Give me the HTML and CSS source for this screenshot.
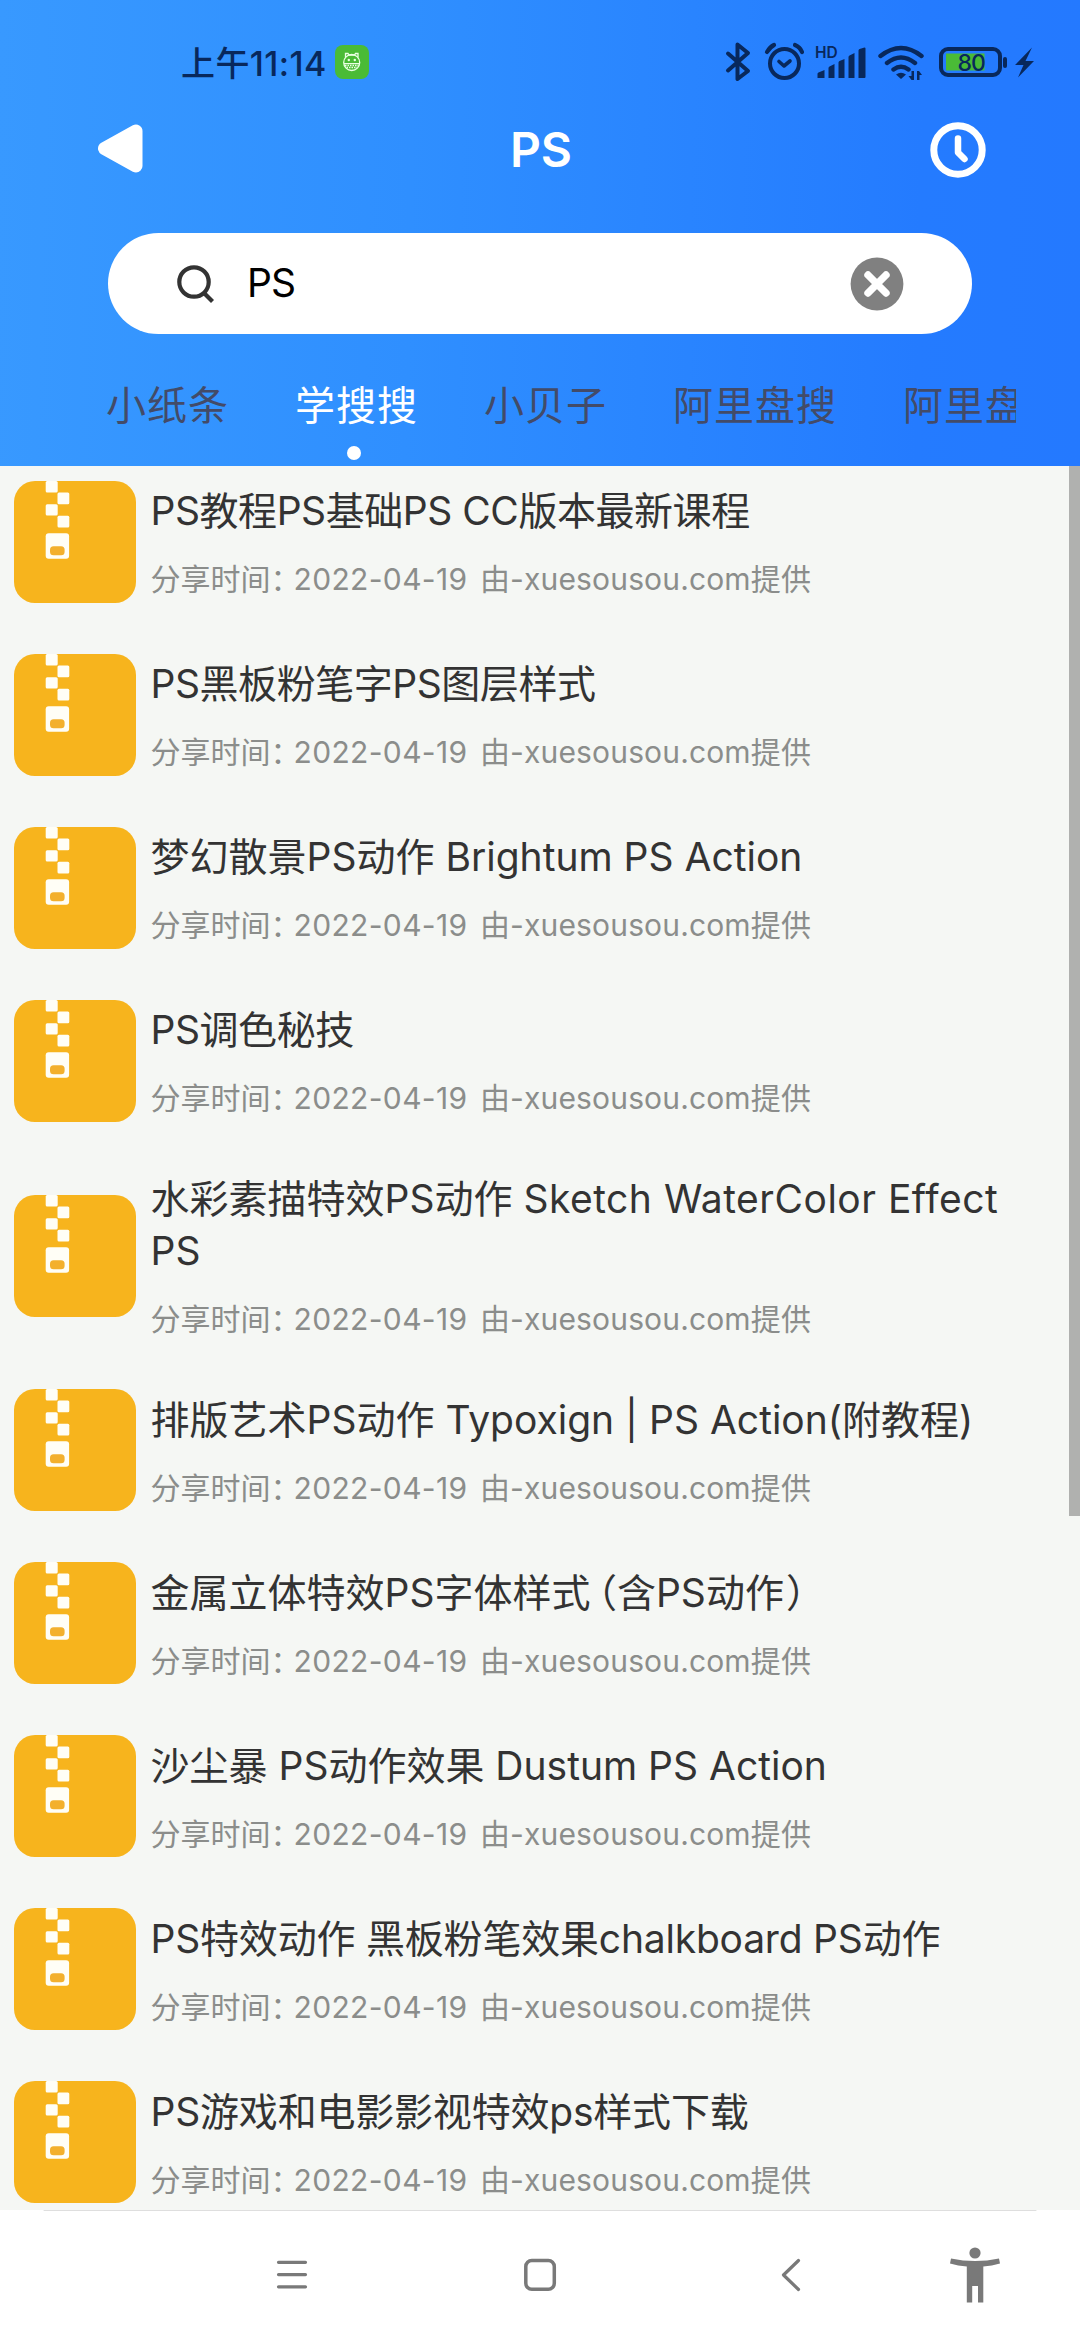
FILE: index.html
```html
<!DOCTYPE html>
<html lang="zh-CN">
<head>
<meta charset="utf-8">
<title>PS</title>
<link rel="stylesheet" href="styles.css">
</head>
<body>
<svg class="defs" width="0" height="0">
  <symbol id="zip" viewBox="0 0 122 122">
    <rect width="122" height="122" rx="21" fill="#f7b41d"/>
    <g fill="#fffef6">
      <rect x="31.7" y="0" width="12" height="11.4" rx="1.5"/>
      <rect x="43.5" y="11.6" width="11.8" height="11.6" rx="1.5"/>
      <rect x="31.7" y="23.2" width="12" height="11.4" rx="1.5"/>
      <rect x="43.5" y="34.8" width="11.8" height="11.6" rx="1.5"/>
      <rect x="31.7" y="52.2" width="23.4" height="25.6" rx="3"/>
    </g>
    <rect x="36" y="65.3" width="14.6" height="9" rx="3.5" fill="#f3b02d"/>
  </symbol>
</svg>
<header class="header">
  <div class="status">
    <span class="clock">上午11:14</span>
    <svg class="app" width="34" height="34" viewBox="0 0 34 34">
      <rect width="34" height="34" rx="8" fill="#4abb36"/>
      <g fill="none" stroke="#e9ffe2" stroke-width="1.3">
        <circle cx="16.7" cy="17.5" r="8"/>
        <path d="M10.5 12.5V8.5h2.5l1 1.5h5.500l1-1.500h2.500v4M9 18.700h15.500"/>
        <path d="M10 20.500h13.500M11.500 22.500h10.500" stroke-dasharray="1.500 1"/>
      </g>
      <circle cx="13.800" cy="15" r="1.200" fill="#e9ffe2"/><circle cx="19.800" cy="15" r="1.200" fill="#e9ffe2"/>
    </svg>
    <svg class="indicators" width="320" height="48" viewBox="720 38 320 48">
      <g fill="none" stroke="#08285c" stroke-linecap="round" stroke-linejoin="round">
        <path d="M728 53.500L748 71L737.500 79V44.500L748 53L728 70.500" stroke-width="4"/>
        <circle cx="784.500" cy="63.500" r="14.500" stroke-width="4"/>
        <path d="M779 61.500l5 4.500 6-5" stroke-width="3.600"/>
        <path d="M767 52q3-5 7-7M795 45q5 2 7 7" stroke-width="4.200"/>
        <path d="M880.500 56q20.500-16 41 0M887 63q14-11 28 0M893.500 69.500q7.500-5.500 15 0" stroke-width="4.400"/>
        <rect x="941" y="49" width="59" height="26" rx="7" stroke-width="4"/>
        <path d="M1005 59v7" stroke-width="4"/>
      </g>
      <g fill="#08285c">
        <path d="M817.500 74q0-1 1-1.400l6-2.600V78h-7zM828.500 68q0-1 1-1.500l5-2.500V78h-6zM838.500 62.500q0-1 1-1.500l5-2V78h-6zM848.500 57q0-1 1-1.500l5-2.500V78h-6zM858.500 50.500q0-1 1-1.500l5-1.500q1 0 1 1V77q0 1-1 1h-6z"/>
        <path d="M896 74.500q5-3.500 10 0L901 79z"/>
        <path d="M914 71v9h-2.500l-3-4h3V71zM917 80v-9h2l3 4h-2.500v5z"/>
        <path d="M1032 47.500L1015 65h8.500L1018 77.500 1034 61h-8.500z"/>
      </g>
      <rect x="946" y="53.500" width="38.500" height="17" fill="#4abb36"/>
      <text class="hd" x="815" y="57.500">HD</text>
      <text class="level" x="957.500" y="70.500">80</text>
    </svg>
  </div>
  <div class="nav">
    <svg width="56" height="56" viewBox="0 0 56 56"><path d="M8.500 26.500L40 9V44z" fill="#fff" stroke="#fff" stroke-width="13" stroke-linejoin="round"/></svg>
    <h1>PS</h1>
    <svg width="56" height="56" viewBox="0 0 56 56" fill="none" stroke="#fff" stroke-linecap="round" stroke-linejoin="round"><circle cx="28" cy="28" r="24.200" stroke-width="7"/><path d="M28 16.500V30.500L34.500 37" stroke-width="6.500"/></svg>
  </div>
  <div class="search">
    <svg width="40" height="42" viewBox="0 0 40 42" fill="none" stroke="#333" stroke-width="4.200"><circle cx="18" cy="19" r="14.700"/><path d="M27 29L36.500 38.500"/></svg>
    <span class="query">PS</span>
    <svg width="54" height="54" viewBox="0 0 54 54"><circle cx="27" cy="27" r="26.400" fill="#808080"/><path d="M18 18L36 36M36 18L18 36" stroke="#fff" stroke-width="7.400" stroke-linecap="round"/></svg>
  </div>
  <div class="tabs">
    <span>小纸条</span><span class="active">学搜搜</span><span>小贝子</span><span>阿里盘搜</span><span>阿里盘</span>
  </div>
</header>
<main class="list">
  <div class="scrollbar"></div>
  <article class="row"><svg class="icon"><use href="#zip"/></svg><div class="text"><h2 class="tight">PS教程PS基础PS CC版本最新课程</h2><p><span class="colon">分享时间：</span><span class="date">2022-04-19</span> <span class="source">由-xuesousou.com提供</span></p></div></article>
  <article class="row"><svg class="icon"><use href="#zip"/></svg><div class="text"><h2 class="tight">PS黑板粉笔字PS图层样式</h2><p><span class="colon">分享时间：</span><span class="date">2022-04-19</span> <span class="source">由-xuesousou.com提供</span></p></div></article>
  <article class="row"><svg class="icon"><use href="#zip"/></svg><div class="text"><h2>梦幻散景PS动作 Brightum PS Action</h2><p><span class="colon">分享时间：</span><span class="date">2022-04-19</span> <span class="source">由-xuesousou.com提供</span></p></div></article>
  <article class="row"><svg class="icon"><use href="#zip"/></svg><div class="text"><h2 class="tight">PS调色秘技</h2><p><span class="colon">分享时间：</span><span class="date">2022-04-19</span> <span class="source">由-xuesousou.com提供</span></p></div></article>
  <article class="row"><svg class="icon"><use href="#zip"/></svg><div class="text"><h2>水彩素描特效PS动作 <span class="wide">Sketch WaterColor Effect</span> PS</h2><p><span class="colon">分享时间：</span><span class="date">2022-04-19</span> <span class="source">由-xuesousou.com提供</span></p></div></article>
  <article class="row"><svg class="icon"><use href="#zip"/></svg><div class="text"><h2>排版艺术PS动作 Typoxign | PS Action(附教程)</h2><p><span class="colon">分享时间：</span><span class="date">2022-04-19</span> <span class="source">由-xuesousou.com提供</span></p></div></article>
  <article class="row"><svg class="icon"><use href="#zip"/></svg><div class="text"><h2>金属立体特效PS字体样式<span class="open">（</span>含PS动作<span class="close">）</span></h2><p><span class="colon">分享时间：</span><span class="date">2022-04-19</span> <span class="source">由-xuesousou.com提供</span></p></div></article>
  <article class="row"><svg class="icon"><use href="#zip"/></svg><div class="text"><h2>沙尘暴 PS动作效果 Dustum PS Action</h2><p><span class="colon">分享时间：</span><span class="date">2022-04-19</span> <span class="source">由-xuesousou.com提供</span></p></div></article>
  <article class="row"><svg class="icon"><use href="#zip"/></svg><div class="text"><h2 class="snug">PS特效动作 黑板粉笔效果chalkboard PS动作</h2><p><span class="colon">分享时间：</span><span class="date">2022-04-19</span> <span class="source">由-xuesousou.com提供</span></p></div></article>
  <article class="row"><svg class="icon"><use href="#zip"/></svg><div class="text"><h2 class="snug">PS游戏和电影影视特效ps样式下载</h2><p><span class="colon">分享时间：</span><span class="date">2022-04-19</span> <span class="source">由-xuesousou.com提供</span></p></div></article>
</main>
<footer class="system">
  <svg width="1080" height="130" viewBox="0 2210 1080 130" fill="none" stroke="#797979" stroke-linecap="round" stroke-linejoin="round">
    <path d="M44 2210.500H1036" stroke="#dedede" stroke-width="1"/>
    <path d="M278.500 2262.300H305.500M278.500 2274.600H305.500M278.500 2286.800H305.500" stroke-width="3.200"/>
    <rect x="525.800" y="2260.500" width="28.500" height="28.800" rx="6" stroke-width="3.500"/>
    <path d="M798.500 2260.500L783.500 2275L798.500 2289.500" stroke-width="3.200"/>
    <g fill="#797979" stroke="none"><circle cx="975" cy="2253" r="5.600"/><path d="M951 2258.500Q975 2263.500 999 2258.500L1000 2263.500Q992 2265.800 983.300 2266.500V2302.600H978V2286H972.200V2302.600H966.800V2266.500Q958 2265.800 950 2263.500z"/></g>
  </svg>
</footer>
</body>
</html>
```
FILE: styles.css
```css
* { box-sizing: border-box; margin: 0; padding: 0; }
body {
  width: 1080px;
  height: 2340px;
  overflow: hidden;
  display: flex;
  flex-direction: column;
  font-family: Inter, "Noto Sans CJK SC", sans-serif;
  background: #fff;
}
svg { display: block; flex: none; }
.defs { position: absolute; }

.header {
  flex: none;
  height: 466px;
  background: linear-gradient(91deg, #3899ff, #2f8fff 38%, #247bff 85%, #2479ff);
}
.status { display: flex; align-items: center; height: 124px; padding: 0 40px 0 181px; }
.clock { width: 154px; margin-top: -2px; font-size: 34px; font-weight: 500; color: #08285c; white-space: nowrap; letter-spacing: 0.4px; }
.indicators { margin-left: auto; }
.hd { font-size: 15.5px; font-weight: 600; fill: #08285c; }
.level { font-size: 23px; font-weight: 500; fill: #08285c; letter-spacing: -1px; }

.nav { display: flex; justify-content: space-between; align-items: center; height: 56px; margin: -2px 94px 0 96px; }
.nav h1 { font-size: 48px; font-weight: 600; line-height: 56px; color: #fff; }

.search {
  display: flex;
  align-items: center;
  height: 101px;
  margin: 55px 108px 0;
  padding: 0 68px;
  border-radius: 51px;
  background: #fff;
}
.query { flex: 1; margin: -2px 0 0 31px; font-size: 39px; letter-spacing: -1px; color: #000; }

.tabs {
  display: flex;
  gap: 66px;
  width: 910px;
  height: 132px;
  margin-left: 106px;
  padding-top: 42px;
  overflow: hidden;
  font-size: 40px;
  line-height: 60px;
  letter-spacing: 1px;
  white-space: nowrap;
  color: #434b68;
}
.tabs .active { color: #fff; }
.tabs .active::after {
  content: "";
  display: block;
  width: 14px;
  height: 14px;
  margin: 10px 0 0 52px;
  border-radius: 50%;
  background: #fff;
}

.list { position: relative; flex: 1; min-height: 0; overflow: hidden; background: #f5f7f4; }
.scrollbar { position: absolute; top: 0; right: 0; width: 11px; height: 1050px; background: #b0b1af; }
.row { display: flex; align-items: center; padding: 15px 60px 36px 14px; }
.icon { width: 122px; height: 122px; }
.text { flex: 1; margin-left: 14.5px; padding-bottom: 1.4px; }
.text h2 { font-size: 39px; font-weight: 400; line-height: 52px; color: #333; }
.text h2.tight { letter-spacing: -0.45px; }
.text h2.snug { letter-spacing: -0.2px; }
.wide { letter-spacing: 0.5px; }
.text p { margin-top: 24px; font-size: 30px; line-height: 36px; color: #8b8d8b; white-space: nowrap; }
.colon { margin-right: -7px; }
.date { letter-spacing: 0.35px; }
.source { margin-left: 4px; letter-spacing: 0.15px; }
.open, .close { font-feature-settings: "halt"; }
.open { margin-left: 7px; }
.close { margin-left: 2px; }

.system { flex: none; height: 130px; }
```
